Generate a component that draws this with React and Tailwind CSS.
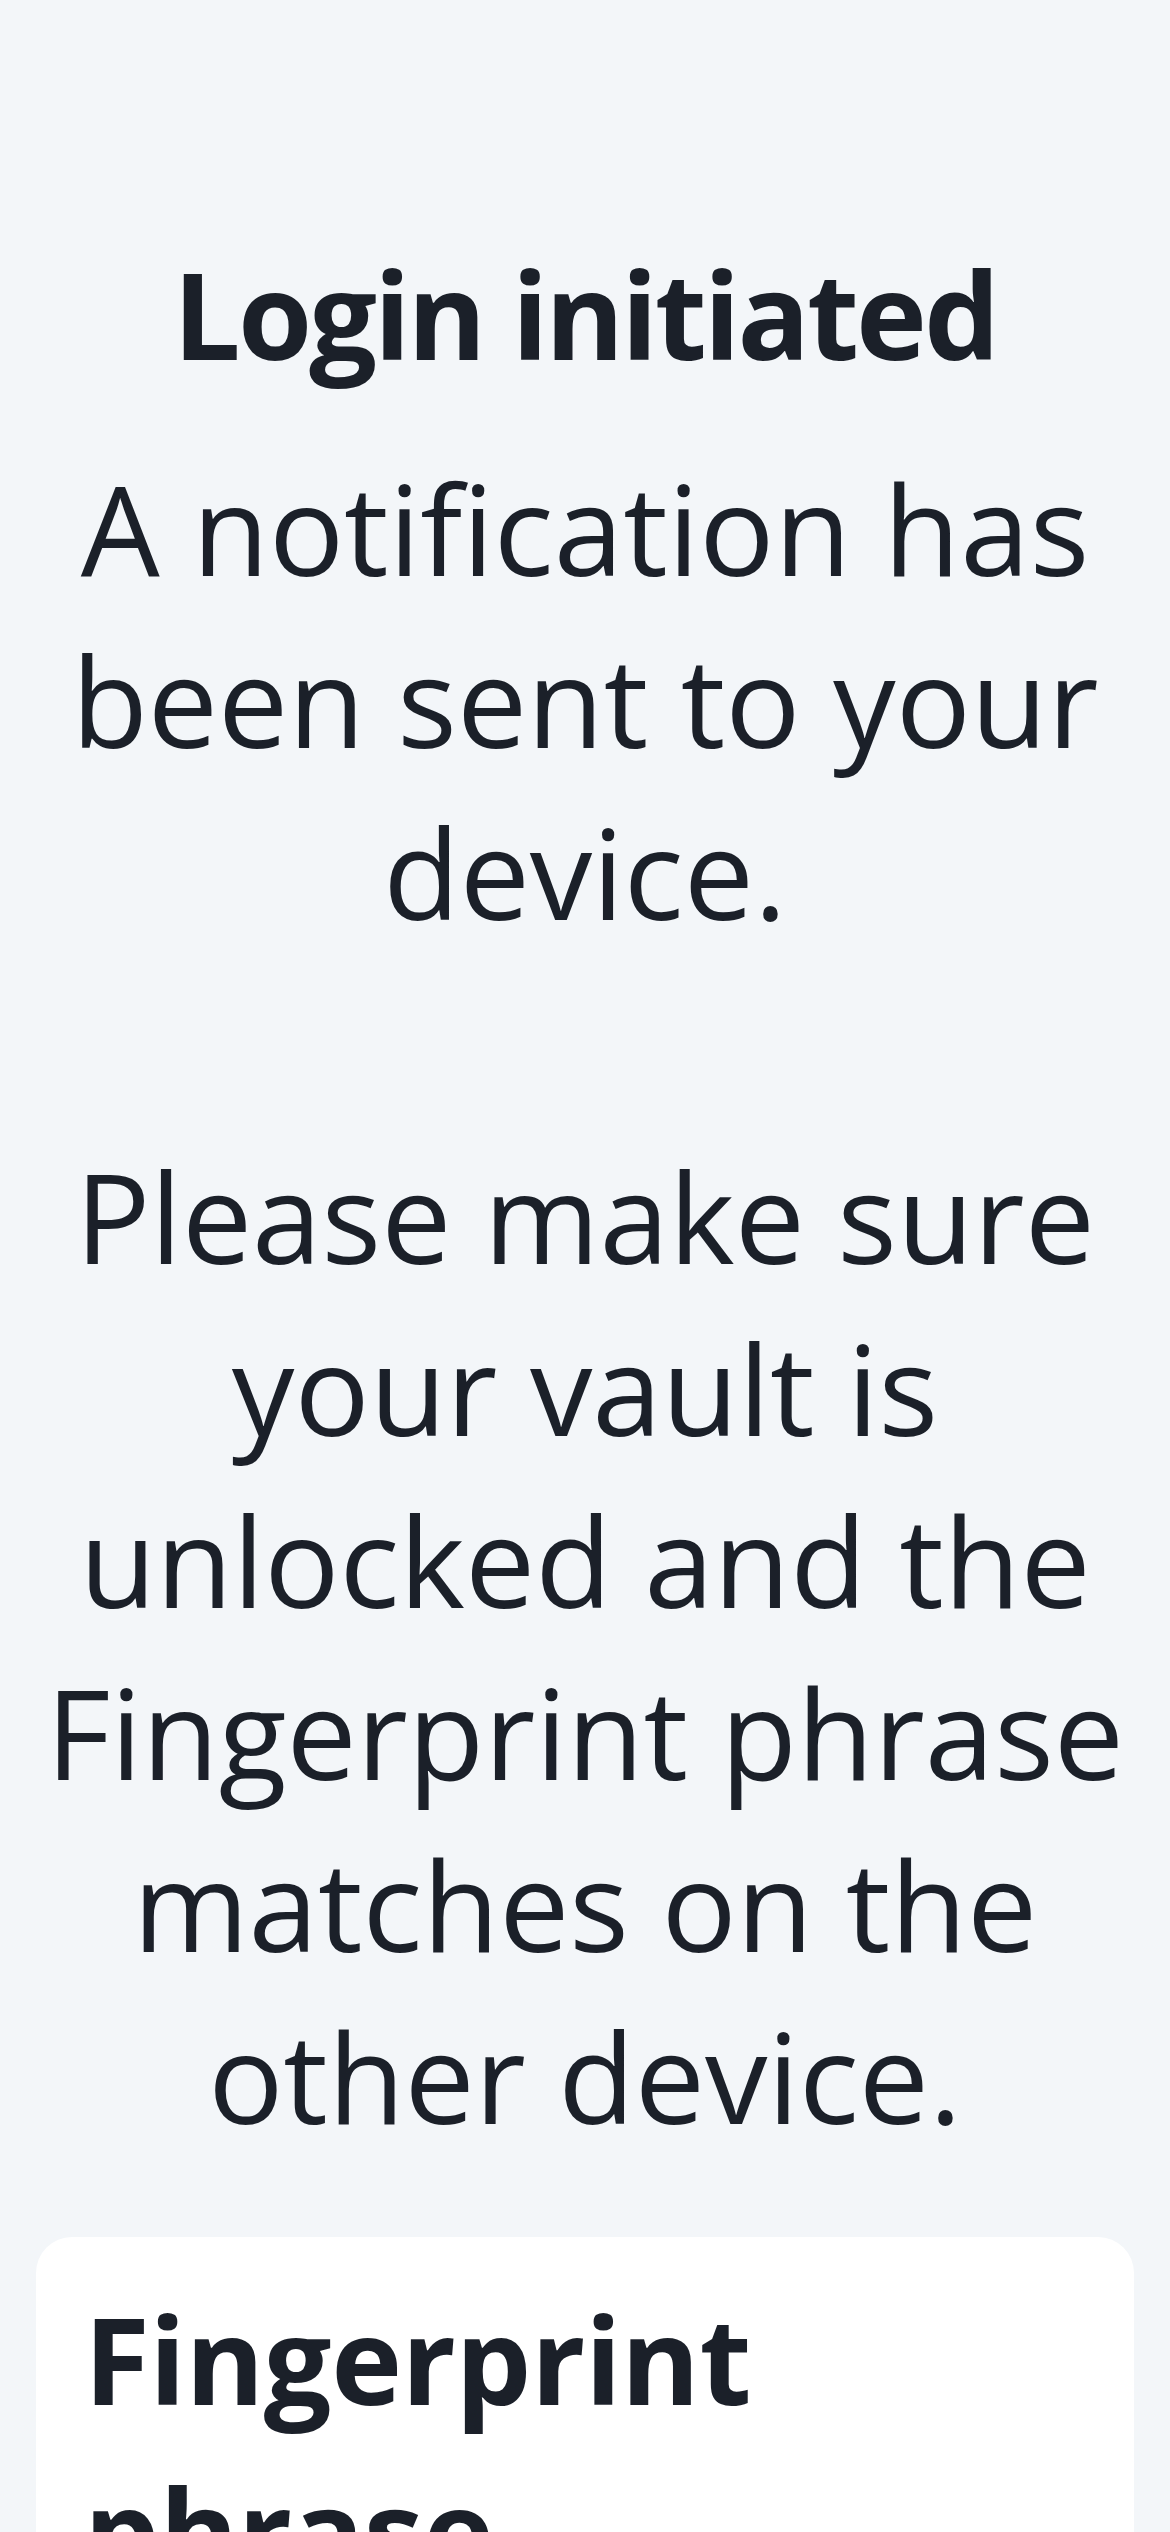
export default function App() {
  const font = { fontFamily: '"Open Sans", "Noto Sans", sans-serif' };
  return (
    <div
      className="min-h-screen bg-[#f3f6f9] px-[36px] pt-[228px] pb-[120px] text-center text-[#1b2029]"
      style={font}
    >
      <h1 className="text-[120px] font-bold leading-[172px] tracking-[-3px]">Login initiated</h1>
      <p className="mt-[42px] text-[125px] font-normal leading-[172px]">
        A notification has been sent to your device.
        <br />
        <br />
        Please make sure your vault is unlocked and the Fingerprint phrase matches on the other device.
      </p>
      <div className="mt-[75px] rounded-[36px] bg-white px-[48px] pt-[36px] pb-[48px] text-left">
        <h2 className="text-[120px] font-bold leading-[172px] tracking-[-0.5px]">Fingerprint phrase</h2>
        <p className="mt-[24px] text-[125px] leading-[172px] text-[#c01176]">
          sprain-unclothed-tinsel-crust-reply
        </p>
      </div>
    </div>
  );
}
